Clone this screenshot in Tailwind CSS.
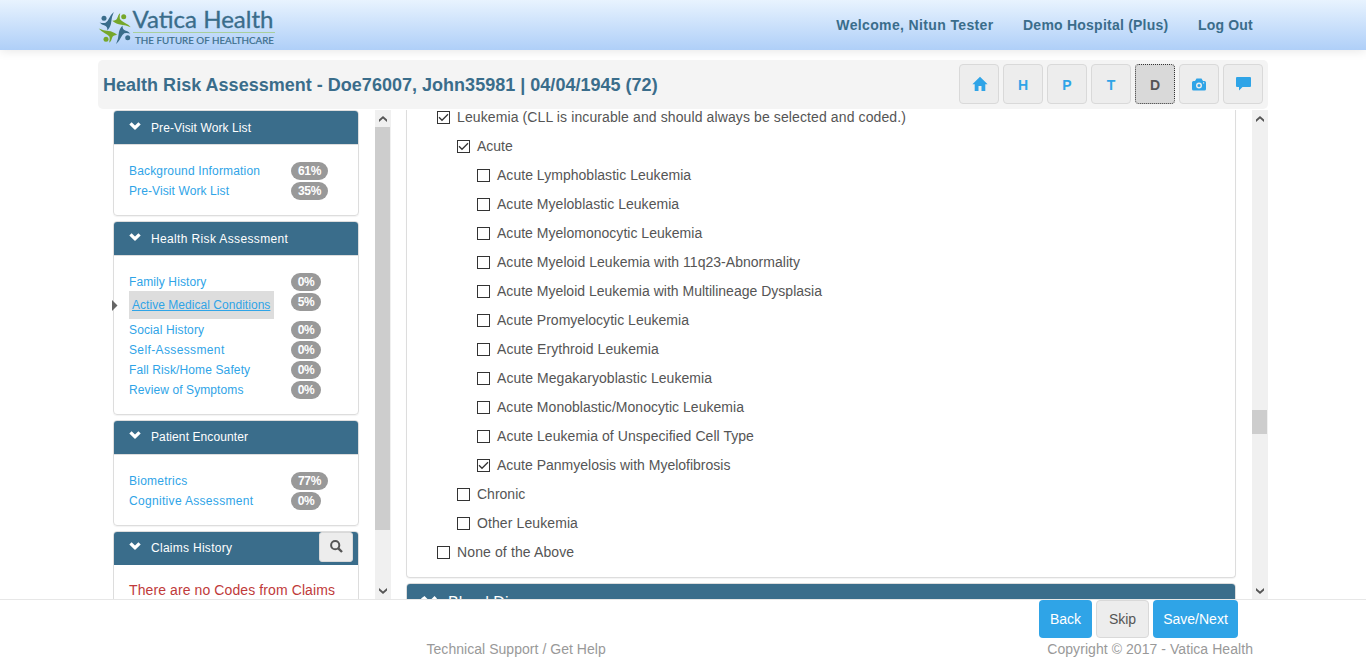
<!DOCTYPE html>
<html lang="en">
<head>
<meta charset="utf-8">
<title>Vatica Health</title>
<script src="https://cdn.jsdelivr.net/npm/@tailwindcss/browser@4"></script>
</head>
<body class="bg-white text-[#555] text-sm h-[669px] overflow-hidden font-['Liberation_Sans',Arial,sans-serif]">
<svg class="hidden">
  <symbol id="chev" viewBox="0 0 12 8"><path d="M0.300 2.600 2.600 0.300 6 3.500 9.400 0.300 11.700 2.600 6 8z" fill="currentColor"/></symbol>
  <symbol id="tick" viewBox="0 0 13 13"><rect x=".5" y=".5" width="12" height="12" fill="#fff" stroke="#333"/><path d="M2 6.300 5 9.300 11 3.300" fill="none" stroke="#333" stroke-width="1.300"/></symbol>
  <symbol id="box" viewBox="0 0 13 13"><rect x=".5" y=".5" width="12" height="12" fill="#fff" stroke="#333"/></symbol>
  <symbol id="up" viewBox="0 0 8 6"><path d="M0 3.600 4 0 8 3.600V6L4 2.400 0 6z" fill="#555"/></symbol>
</svg>
<header class="h-[50px] bg-linear-to-b from-[#e8f3fe] to-[#afcff8] shadow-[0_1px_10px_rgba(0,0,0,0.1)] relative">
  <div class="w-[1170px] ml-[98px] h-full flex justify-between">
    <svg width="190" height="50" viewBox="-1 0 190 50">
      <defs><path id="fig" d="M-2.500-6.800Q1.500-6.600 2.600-9.500Q3-12.500 5.500-14.600Q4.500-11 5.200-8.600Q6.500-6.600 9.500-5.200Q13.500-3.400 16-.4Q11-2.600 6.500-2.900Q1.500-3.200-2.500-6.800z"/></defs>
      <g fill="#76a72b"><circle cx="24.700" cy="16.700" r="2.500"/><circle cx="7" cy="39.300" r="2.500"/>
      <use href="#fig" transform="translate(15.700 27.600)"/><use href="#fig" transform="translate(15.700 28.200) rotate(180)"/></g>
      <g fill="#3a6d8b"><circle cx="5" cy="18.300" r="2.500"/><circle cx="28.700" cy="37.700" r="2.500"/>
      <use href="#fig" transform="translate(15.200 28) rotate(-90)"/><use href="#fig" transform="translate(16.700 28) rotate(90)"/></g>
      <text x="33.500" y="28" textLength="141" lengthAdjust="spacingAndGlyphs" font-family="Lato" font-size="22.500" fill="#3a6d8b" stroke="#3a6d8b" stroke-width=".3">Vatica Health</text>
      <path d="M34 32.500H176" stroke="#a9cf9c"/>
      <text x="36" y="44" textLength="139" lengthAdjust="spacingAndGlyphs" font-family="Lato" font-size="10.300" fill="#3a6d8b" stroke="#3a6d8b" stroke-width=".2">THE FUTURE OF HEALTHCARE</text>
    </svg>
    <nav class="flex items-center gap-[29.500px] pr-[15px] font-bold text-[#3a6d8b]">
      <span class="tracking-[0.36px]">Welcome, Nitun Tester</span><span class="tracking-[0.23px]">Demo Hospital (Plus)</span><span class="tracking-[0.2px]">Log Out</span>
    </nav>
  </div>
</header>

<section class="mt-[10px] ml-[98px] w-[1170px] h-[49px] bg-[#f4f4f4] rounded-[5px] flex items-center justify-between pl-[5px] pr-[5px] relative">
  <h1 class="text-[18px] font-bold text-[#3a6d8b] pt-0.5 tracking-[0.016px]">Health Risk Assessment - Doe76007, John35981 | 04/04/1945 (72)</h1>
  <div class="flex gap-1 pb-px text-[#2fa4e7] font-bold">
    <span class="size-10 border border-[#d9d9d9] bg-[#ededed] rounded flex items-center justify-center pl-px"><svg width="16" height="16" viewBox="0 0 16 16" fill="currentColor"><path d="M8 .8 15.600 8.300H13.300V15H9.500V10H6.500V15H2.700V8.300H.4z"/></svg></span>
    <span class="size-10 border border-[#d9d9d9] bg-[#ededed] rounded flex items-center justify-center pt-0.5">H</span>
    <span class="size-10 border border-[#d9d9d9] bg-[#ededed] rounded flex items-center justify-center pt-0.5">P</span>
    <span class="size-10 border border-[#d9d9d9] bg-[#ededed] rounded flex items-center justify-center pt-0.5">T</span>
    <span class="size-10 border border-dotted border-[#333] bg-[#d9d9d9] text-[#555] rounded flex items-center justify-center pt-0.5">D</span>
    <span class="size-10 border border-[#d9d9d9] bg-[#ededed] rounded flex items-center justify-center"><svg width="14" height="13" viewBox="0 0 14 13"><path d="M0 4.500Q0 3 1.500 3H3L4.500.5H9.500L11 3H12.500Q14 3 14 4.500V11Q14 12.500 12.500 12.500H1.500Q0 12.500 0 11z" fill="currentColor"/><circle cx="7" cy="7.500" r="2.300" fill="#2fa4e7" stroke="#ededed" stroke-width="1.400"/><rect x="11" y="4.300" width="1.200" height="1.200" fill="#ededed"/></svg></span>
    <span class="size-10 border border-[#d9d9d9] bg-[#ededed] rounded flex items-center justify-center"><svg width="15" height="14" viewBox="0 0 15 14"><path d="M1 0H14Q15 0 15 1V9Q15 10 14 10H6.500L3 13.500V10H1Q0 10 0 9V1Q0 0 1 0z" fill="currentColor"/></svg></span>
  </div>
</section>

<main class="mt-px h-[489px] ml-[98px] w-[1170px] flex overflow-hidden">
  <aside class="w-[277px] pl-[15px] pr-4 h-full text-xs text-[#2fa4e7] flex flex-col gap-[5px] shrink-0">
    <section class="h-[106px] shrink-0 border border-[#ddd] rounded shadow-[0_1px_1px_rgba(0,0,0,0.05)]">
      <h2 class="h-[33px] bg-[#3a6d8b] text-white rounded-t-[3px] flex items-center pl-[15px] gap-[10px]"><svg class="w-3 h-2 -mt-1"><use href="#chev"/></svg><span class="tracking-[0.1px]">Pre-Visit Work List</span></h2>
      <div class="border-t border-[#ddd] pt-4 pl-[15px]">
        <div class="h-5 flex items-center"><span class="w-[162px] tracking-[0.17px]">Background Information</span><b class="h-[18px] leading-[18px] px-[7px] tracking-[-0.350px] rounded-full bg-[#999] text-white">61%</b></div>
        <div class="h-5 flex items-center"><span class="w-[162px] tracking-[0.1px]">Pre-Visit Work List</span><b class="h-[18px] leading-[18px] px-[7px] tracking-[-0.350px] rounded-full bg-[#999] text-white">35%</b></div>
      </div>
    </section>
    <section class="h-[194px] shrink-0 border border-[#ddd] rounded shadow-[0_1px_1px_rgba(0,0,0,0.05)]">
      <h2 class="h-[33px] bg-[#3a6d8b] text-white rounded-t-[3px] flex items-center pl-[15px] gap-[10px]"><svg class="w-3 h-2 -mt-1"><use href="#chev"/></svg><span class="tracking-[0.36px]">Health Risk Assessment</span></h2>
      <div class="border-t border-[#ddd] pt-4 pl-[15px]">
        <div class="h-5 flex items-center"><span class="w-[162px] tracking-[0.1px]">Family History</span><b class="h-[18px] leading-[18px] w-[30px] text-center tracking-[-0.350px] rounded-full bg-[#999] text-white">0%</b></div>
        <div class="h-7 flex items-start relative">
          <svg class="absolute -left-[17px] top-[8px]" width="6" height="11" viewBox="0 0 6 11"><path d="M0 0 5.500 5.500 0 11z" fill="#666"/></svg>
          <div class="w-[162px] shrink-0"><span class="block w-[145px] h-7 leading-7 -mt-px bg-[#ddd] pl-[3px] underline whitespace-nowrap tracking-[0.04px]">Active Medical Conditions</span></div><b class="mt-px h-[18px] leading-[18px] w-[30px] text-center tracking-[-0.350px] rounded-full bg-[#999] text-white">5%</b></div>
        <div class="h-5 flex items-center"><span class="w-[162px] tracking-[0.13px]">Social History</span><b class="h-[18px] leading-[18px] w-[30px] text-center tracking-[-0.350px] rounded-full bg-[#999] text-white">0%</b></div>
        <div class="h-5 flex items-center"><span class="w-[162px] tracking-[0.37px]">Self-Assessment</span><b class="h-[18px] leading-[18px] w-[30px] text-center tracking-[-0.350px] rounded-full bg-[#999] text-white">0%</b></div>
        <div class="h-5 flex items-center"><span class="w-[162px] tracking-[0.12px]">Fall Risk/Home Safety</span><b class="h-[18px] leading-[18px] w-[30px] text-center tracking-[-0.350px] rounded-full bg-[#999] text-white">0%</b></div>
        <div class="h-5 flex items-center"><span class="w-[162px] tracking-[0.1px]">Review of Symptoms</span><b class="h-[18px] leading-[18px] w-[30px] text-center tracking-[-0.350px] rounded-full bg-[#999] text-white">0%</b></div>
      </div>
    </section>
    <section class="h-[106px] shrink-0 border border-[#ddd] rounded shadow-[0_1px_1px_rgba(0,0,0,0.05)]">
      <h2 class="h-[33px] bg-[#3a6d8b] text-white rounded-t-[3px] flex items-center pl-[15px] gap-[10px]"><svg class="w-3 h-2 -mt-1.5"><use href="#chev"/></svg><span class="pb-0.5 tracking-[0.1px]">Patient Encounter</span></h2>
      <div class="border-t border-[#ddd] pt-4 pl-[15px]">
        <div class="h-5 flex items-center"><span class="w-[162px] tracking-[0.25px]">Biometrics</span><b class="h-[18px] leading-[18px] px-[7px] tracking-[-0.350px] rounded-full bg-[#999] text-white">77%</b></div>
        <div class="h-5 flex items-center"><span class="w-[162px] tracking-[0.32px]">Cognitive Assessment</span><b class="h-[18px] leading-[18px] w-[30px] text-center tracking-[-0.350px] rounded-full bg-[#999] text-white">0%</b></div>
      </div>
    </section>
    <section class="h-[106px] shrink-0 border border-[#ddd] rounded">
      <h2 class="h-[33px] bg-[#3a6d8b] text-white rounded-t-[3px] flex items-center pl-[15px] pr-[5px] gap-[10px]"><svg class="w-3 h-2 -mt-1.5"><use href="#chev"/></svg><span class="pb-0.5 tracking-[0.28px]">Claims History</span>
        <span class="ml-auto w-[34px] h-[30px] -mt-[3px] bg-[#ededed] border border-[#d9d9d9] rounded-[3px] flex items-center justify-center pb-0.5"><svg width="13" height="13" viewBox="0 0 13 13" fill="none" stroke="#555" stroke-width="2"><circle cx="5.200" cy="5.200" r="4.100"/><path d="M8.300 8.300 12 12" stroke-width="2.400"/></svg></span></h2>
      <p class="pt-[15px] pl-[15px] text-sm text-[#c03a3a] whitespace-nowrap tracking-[0.1px]">There are no Codes from Claims</p>
    </section>
  </aside>
  <div class="w-4 shrink-0 bg-[#f0f0f0] flex flex-col items-center">
    <svg class="w-2 h-1.5 mt-[6px] mb-[5px] mr-px shrink-0"><use href="#up"/></svg>
    <div class="w-[15px] h-[403px] shrink-0 bg-[#cdcdcd] mr-px"></div>
    <svg class="w-2 h-1.5 mt-auto mb-[5px] mr-px shrink-0 rotate-180"><use href="#up"/></svg>
  </div>
  <div class="ml-[15px] w-[830px] shrink-0">
    <section class="-mt-[7px] h-[475px] border border-t-0 border-[#ddd] rounded-b shadow-[0_1px_1px_rgba(0,0,0,0.05)] pl-[30px]">
      <div class="h-[29px] flex items-center gap-[7px]"><svg class="size-[13px]"><use href="#tick"/></svg><span class="pb-0.5 tracking-[0.11px]">Leukemia (CLL is incurable and should always be selected and coded.)</span></div>
      <div class="h-[29px] flex items-center gap-[7px] pl-5"><svg class="size-[13px]"><use href="#tick"/></svg><span class="pb-0.5">Acute</span></div>
      <div class="h-[29px] flex items-center gap-[7px] pl-10"><svg class="size-[13px]"><use href="#box"/></svg><span class="pb-0.5 tracking-[0.03px]">Acute Lymphoblastic Leukemia</span></div>
      <div class="h-[29px] flex items-center gap-[7px] pl-10"><svg class="size-[13px]"><use href="#box"/></svg><span class="pb-0.5 tracking-[0.03px]">Acute Myeloblastic Leukemia</span></div>
      <div class="h-[29px] flex items-center gap-[7px] pl-10"><svg class="size-[13px]"><use href="#box"/></svg><span class="pb-0.5 tracking-[0.02px]">Acute Myelomonocytic Leukemia</span></div>
      <div class="h-[29px] flex items-center gap-[7px] pl-10"><svg class="size-[13px]"><use href="#box"/></svg><span class="pb-0.5 tracking-[0.03px]">Acute Myeloid Leukemia with 11q23-Abnormality</span></div>
      <div class="h-[29px] flex items-center gap-[7px] pl-10"><svg class="size-[13px]"><use href="#box"/></svg><span class="pb-0.5 tracking-[0.01px]">Acute Myeloid Leukemia with Multilineage Dysplasia</span></div>
      <div class="h-[29px] flex items-center gap-[7px] pl-10"><svg class="size-[13px]"><use href="#box"/></svg><span class="pb-0.5 tracking-[0.02px]">Acute Promyelocytic Leukemia</span></div>
      <div class="h-[29px] flex items-center gap-[7px] pl-10"><svg class="size-[13px]"><use href="#box"/></svg><span class="pb-0.5 tracking-[0.06px]">Acute Erythroid Leukemia</span></div>
      <div class="h-[29px] flex items-center gap-[7px] pl-10"><svg class="size-[13px]"><use href="#box"/></svg><span class="pb-0.5 tracking-[0.06px]">Acute Megakaryoblastic Leukemia</span></div>
      <div class="h-[29px] flex items-center gap-[7px] pl-10"><svg class="size-[13px]"><use href="#box"/></svg><span class="pb-0.5 tracking-[0.03px]">Acute Monoblastic/Monocytic Leukemia</span></div>
      <div class="h-[29px] flex items-center gap-[7px] pl-10"><svg class="size-[13px]"><use href="#box"/></svg><span class="pb-0.5 tracking-[0.05px]">Acute Leukemia of Unspecified Cell Type</span></div>
      <div class="h-[29px] flex items-center gap-[7px] pl-10"><svg class="size-[13px]"><use href="#tick"/></svg><span class="pb-0.5">Acute Panmyelosis with Myelofibrosis</span></div>
      <div class="h-[29px] flex items-center gap-[7px] pl-5"><svg class="size-[13px]"><use href="#box"/></svg><span class="pb-0.5">Chronic</span></div>
      <div class="h-[29px] flex items-center gap-[7px] pl-5"><svg class="size-[13px]"><use href="#box"/></svg><span class="pb-0.5 tracking-[0.1px]">Other Leukemia</span></div>
      <div class="h-[29px] flex items-center gap-[7px]"><svg class="size-[13px]"><use href="#box"/></svg><span class="pb-0.5 tracking-[0.12px]">None of the Above</span></div>
    </section>
    <section class="mt-[5px] h-[40px] border border-[#ddd] rounded-t">
      <h2 class="h-[38px] bg-[#3a6d8b] text-white rounded-t-[3px] pl-[14px] pt-[9px] flex gap-[10px] text-base leading-5"><svg class="mt-[3px]" width="17" height="14" viewBox="0 0 17 14" fill="#fff"><path d="M0 2.500 3.500 0 6 2.500 8.500 5 11 2.500 13.500 0 16 2.500 11 7.500 16 12 13.500 14 8.500 9.500 3.500 14 1 12 6 7.500z"/></svg><span>Blood Diseases</span></h2>
    </section>
  </div>
  <div class="ml-auto w-4 shrink-0 bg-[#f0f0f0] flex flex-col items-center">
    <svg class="w-2 h-1.5 mt-[6px] mr-px shrink-0"><use href="#up"/></svg>
    <div class="w-[15px] h-6 mt-[288px] shrink-0 bg-[#cdcdcd] mr-px"></div>
    <svg class="w-2 h-1.5 mt-auto mb-[5px] mr-px shrink-0 rotate-180"><use href="#up"/></svg>
  </div>
</main>

<footer class="border-t border-[#e7e7e7] h-[70px]">
  <div class="ml-[1039px] flex gap-1">
    <span class="w-[53px] h-[38px] rounded bg-[#2fa4e7] text-white flex items-center justify-center">Back</span>
    <span class="w-[53px] h-[38px] rounded bg-[#ededed] border border-[#d9d9d9] flex items-center justify-center">Skip</span>
    <span class="w-[85px] h-[38px] rounded bg-[#2fa4e7] text-white flex items-center justify-center">Save/Next</span>
  </div>
  <div class="ml-[426.500px] w-[826.500px] flex justify-between text-[#999] mt-px"><span class="tracking-[0.04px]">Technical Support / Get Help</span><span class="tracking-[0.06px]">Copyright © 2017 - Vatica Health</span></div>
</footer>
</body>
</html>
